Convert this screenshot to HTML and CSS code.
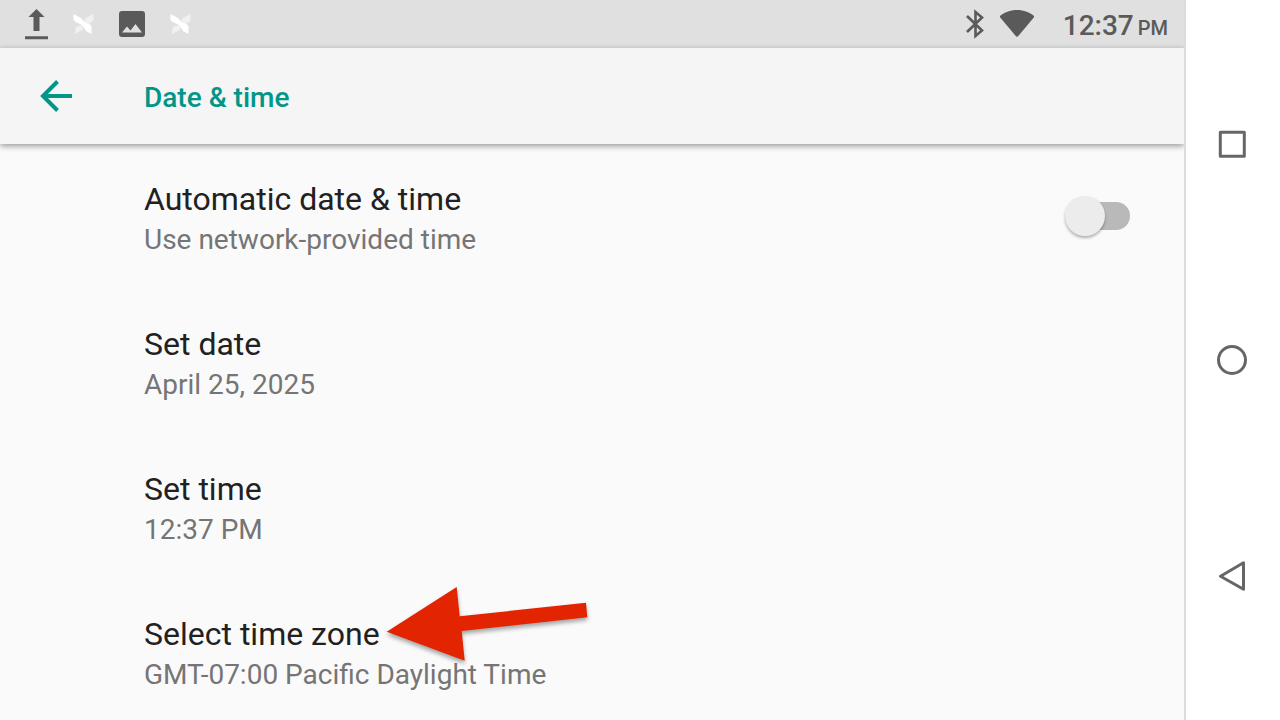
FILE: index.html
```html
<!DOCTYPE html>
<html lang="en">
<head>
    <meta charset="UTF-8">
    <meta name="viewport" content="width=device-width, initial-scale=1.0">
    <title>Date &amp; time</title>
    <link rel="stylesheet" href="styles.css">
</head>
<body>

<div class="screen">
    <div class="status-bar">
        <div class="notifications">
            <svg width="24" height="32" viewBox="0 0 24 32" fill="#5a5a5a">
                <path d="M12.500 1L20.500 9H15.500V23H9.500V9H4.500ZM1 28.300H24V31.300H1Z"/>
            </svg>
            <svg width="23" height="22" viewBox="0 0 23 22">
                <path fill="#f0f0f0" d="M21.500 1L13.500 5L12.500 7V10L15 12L20 9L21.500 7ZM9.500 12L5 13.500L3.500 15L3 21L10.500 17L11.500 14Z"/>
                <path fill="#fff" d="M1.500 1L9 5L12.500 9L18 11.500L19.500 13.500V21L14 18L11 13L9 11.500L3 8.500L1.500 6.500Z"/>
            </svg>
            <svg width="26" height="26" viewBox="0 0 26 26">
                <path fill="#5a5a5a" fill-rule="evenodd" d="M3 0H23Q26 0 26 3V23Q26 26 23 26H3Q0 26 0 23V3Q0 0 3 0ZM3 21.500H23L16.500 13L11.500 19.500L8 15.500Z"/>
            </svg>
            <svg width="23" height="22" viewBox="0 0 23 22">
                <path fill="#f0f0f0" d="M21.500 1L13.500 5L12.500 7V10L15 12L20 9L21.500 7ZM9.500 12L5 13.500L3.500 15L3 21L10.500 17L11.500 14Z"/>
                <path fill="#fff" d="M1.500 1L9 5L12.500 9L18 11.500L19.500 13.500V21L14 18L11 13L9 11.500L3 8.500L1.500 6.500Z"/>
            </svg>
        </div>
        <div class="system">
            <svg width="20" height="30" viewBox="0 0 20 30" fill="none" stroke="#5a5a5a" stroke-width="2.600">
                <path d="M2 7L17 21.500L10.500 27V3L17 8.500L2 23"/>
            </svg>
            <svg width="36" height="28" viewBox="0 0 36 28" fill="#5a5a5a">
                <path d="M18 0C11 0 5 2.500 1.500 5.500Q0.500 6.500 1.200 7.500L16.500 25.800Q18 27.500 19.500 25.800L34.800 7.500Q35.500 6.500 34.500 5.500C31 2.500 25 0 18 0Z"/>
            </svg>
            <div class="clock">12:37 <small>PM</small></div>
        </div>
    </div>

    <header class="toolbar">
        <button class="back" type="button" aria-label="Navigate up">
            <svg width="34" height="32" viewBox="0 0 34 32" fill="none" stroke="#009688" stroke-width="4">
                <path d="M18.500 1.500L4 16L18.500 30.500M3 16H33"/>
            </svg>
        </button>
        <h1>Date &amp; time</h1>
    </header>

    <main class="settings">
        <div class="row">
            <label class="text" for="autoTime">
                <span class="title">Automatic date &amp; time</span>
                <span class="summary">Use network-provided time</span>
            </label>
            <input class="switch" id="autoTime" type="checkbox" role="switch">
        </div>
        <button class="row" type="button">
            <span class="text">
                <span class="title">Set date</span>
                <span class="summary">April 25, 2025</span>
            </span>
        </button>
        <button class="row" type="button">
            <span class="text">
                <span class="title">Set time</span>
                <span class="summary">12:37 PM</span>
            </span>
        </button>
        <button class="row" type="button">
            <span class="text">
                <span class="title">Select time zone
                    <svg class="arrow" width="220" height="90" viewBox="380 580 220 90" fill="#e32400">
                        <path d="M386.700 631.700L456.700 587L459.700 616.300L586 602.700L587.300 617.300L461.700 631L464.700 660.700Z"/>
                    </svg>
                </span>
                <span class="summary">GMT-07:00 Pacific Daylight Time</span>
            </span>
        </button>
    </main>
</div>

<nav class="nav-bar">
    <button type="button" aria-label="Recent apps">
        <svg width="32" height="32" viewBox="0 0 32 32">
            <rect x="4.300" y="4.300" width="24" height="24"/>
        </svg>
    </button>
    <button type="button" aria-label="Home">
        <svg width="32" height="32" viewBox="0 0 32 32">
            <circle cx="16" cy="16" r="13.500"/>
        </svg>
    </button>
    <button type="button" aria-label="Back">
        <svg width="32" height="32" viewBox="0 0 32 32">
            <path d="M4.500 16.300L27.500 2.800V29.300Z"/>
        </svg>
    </button>
</nav>

</body>
</html>
```
FILE: styles.css
```css
* {
    box-sizing: border-box;
}

body {
    margin: 0;
    height: 100vh;
    display: flex;
    overflow: hidden;
    font-family: Roboto, sans-serif;
    background-color: #fafafa;
    color: #212121;
}

svg {
    display: block;
    flex: none;
}

button {
    border: 0;
    padding: 0;
    background: none;
    color: inherit;
    font: inherit;
}

.screen {
    flex: 1;
    min-width: 0;
    display: flex;
    flex-direction: column;
    overflow: hidden;
}

.status-bar {
    flex: none;
    height: 48px;
    padding: 0 16px 0 24px;
    display: flex;
    justify-content: space-between;
    align-items: center;
    background-color: #e0e0e0;
    color: #5a5a5a;
}

.notifications {
    display: flex;
    align-items: center;
    gap: 24px;
}

.system {
    display: flex;
    align-items: center;
    gap: 14px;
}

.clock {
    margin-left: 14px;
    padding-top: 6px;
    font-size: 28px;
    font-weight: 500;
    line-height: 32px;
}

.clock small {
    font-size: 20px;
    margin-left: -3px;
}

.toolbar {
    flex: none;
    height: 96px;
    display: flex;
    align-items: center;
    background-color: #f5f5f5;
    box-shadow: 0 2px 6px rgba(0, 0, 0, 0.4);
    z-index: 1;
}

.back {
    width: 144px;
    padding-left: 39px;
}

.toolbar h1 {
    margin: 0;
    padding-top: 2px;
    font-size: 28px;
    font-weight: 500;
    color: #009688;
}

.row {
    width: 100%;
    padding: 27px 54px 28px 144px;
    display: flex;
    align-items: center;
    justify-content: space-between;
    text-align: left;
}

.text {
    padding-top: 8px;
    display: flex;
    flex-direction: column;
    align-items: flex-start;
}

.title {
    position: relative;
    font-size: 32px;
    line-height: 40px;
}

.summary {
    font-size: 28px;
    line-height: 42px;
    color: #757575;
}

.switch {
    appearance: none;
    position: relative;
    width: 56px;
    height: 28px;
    margin: 0;
    border-radius: 14px;
    background-color: #b9b9b9;
}

.switch::before {
    content: "";
    position: absolute;
    top: -6px;
    left: -9px;
    width: 40px;
    height: 40px;
    border-radius: 50%;
    background-color: #ececec;
    box-shadow: 0 2px 3px rgba(0, 0, 0, 0.3);
}

.switch:checked::before {
    left: 25px;
    background-color: #009688;
}

.arrow {
    position: absolute;
    left: 100%;
    top: -34px;
    filter: drop-shadow(0 3px 2px rgba(0, 0, 0, 0.35));
}

.nav-bar {
    flex: none;
    width: 96px;
    display: flex;
    flex-direction: column;
    align-items: center;
    justify-content: space-around;
    padding: 36px 2px 36px 0;
    border-left: 2px solid #dcdcdc;
    background-color: #fff;
}

.nav-bar svg {
    fill: none;
    stroke: #666;
    stroke-width: 3;
    stroke-linejoin: round;
}
```
